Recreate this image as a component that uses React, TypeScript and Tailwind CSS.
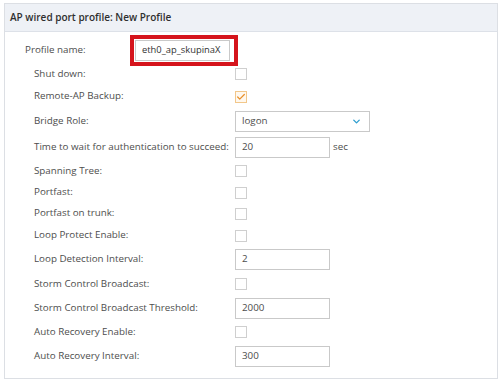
import { ChevronDown, Check } from "lucide-react";

type Row = {
  label: string;
  h: number;
  kind: "check" | "checked" | "input" | "select";
  value?: string;
  suffix?: string;
};

const rows: Row[] = [
  { label: "Shut down:", h: 22, kind: "check" },
  { label: "Remote-AP Backup:", h: 23, kind: "checked" },
  { label: "Bridge Role:", h: 27, kind: "select", value: "logon" },
  { label: "Time to wait for authentication to succeed:", h: 25, kind: "input", value: "20", suffix: "sec" },
  { label: "Spanning Tree:", h: 22, kind: "check" },
  { label: "Portfast:", h: 21, kind: "check" },
  { label: "Portfast on trunk:", h: 21, kind: "check" },
  { label: "Loop Protect Enable:", h: 23, kind: "check" },
  { label: "Loop Detection Interval:", h: 25, kind: "input", value: "2" },
  { label: "Storm Control Broadcast:", h: 24, kind: "check" },
  { label: "Storm Control Broadcast Threshold:", h: 24, kind: "input", value: "2000" },
  { label: "Auto Recovery Enable:", h: 24, kind: "check" },
  { label: "Auto Recovery Interval:", h: 24, kind: "input", value: "300" },
];

const Control = ({ row }: { row: Row }) => {
  if (row.kind === "check") {
    return <div className="w-[12px] h-[12px] border border-[#cfcfcf] bg-white" />;
  }
  if (row.kind === "checked") {
    return (
      <div className="w-[12px] h-[12px] border border-[#f2c78a] bg-[#fff8ee] flex items-center justify-center">
        <Check className="w-[10px] h-[10px] text-[#e9902a]" strokeWidth={3} />
      </div>
    );
  }
  if (row.kind === "select") {
    return (
      <div className="w-[135px] h-[21px] border border-[#c9c9c9] bg-white flex items-center justify-between pl-[6px] pr-[7px]">
        <span>{row.value}</span>
        <ChevronDown className="w-[11px] h-[11px] text-[#2f9fd0]" strokeWidth={3} />
      </div>
    );
  }
  return (
    <div className="flex items-center">
      <div className="w-[95px] h-[21px] border border-[#c9c9c9] bg-white flex items-center pl-[6px]">
        {row.value}
      </div>
      {row.suffix && <span className="ml-[3px]">{row.suffix}</span>}
    </div>
  );
};

export default function App() {
  return (
    <div className="w-[500px] h-[381px] bg-white pt-[3px] pl-[4px] font-['Open_Sans',sans-serif] text-[9.8px] text-[#4d4d4d]">
      <div className="w-[494px] h-[376px] border border-[#dcdfe4] flex flex-col">
        <div className="h-[28px] bg-[#eef1f6] border-b border-[#dde1e8] flex items-center pl-[5px] font-semibold text-[10px] text-[#2f2f2f]">
          AP wired port profile: New Profile
        </div>
        <div className="flex flex-col">
          <div className="h-[31px] flex items-start pt-[3px]">
            <div className="w-[125px] pl-[20px] h-[31px] flex items-center">Profile name:</div>
            <div className="border-4 border-[#d5141c] pl-[1px] pr-[4px] py-[1px]">
              <div className="w-[95px] h-[21px] border border-[#c9c9c9] bg-white flex items-center pl-[6px] text-[9.4px] text-[#333] whitespace-nowrap overflow-hidden">
                eth0_ap_skupinaX
              </div>
            </div>
          </div>
          {rows.map((row) => (
            <div key={row.label} className="flex items-center" style={{ height: row.h }}>
              <div className="w-[230px] pl-[29px] whitespace-nowrap">{row.label}</div>
              <Control row={row} />
            </div>
          ))}
        </div>
      </div>
    </div>
  );
}
